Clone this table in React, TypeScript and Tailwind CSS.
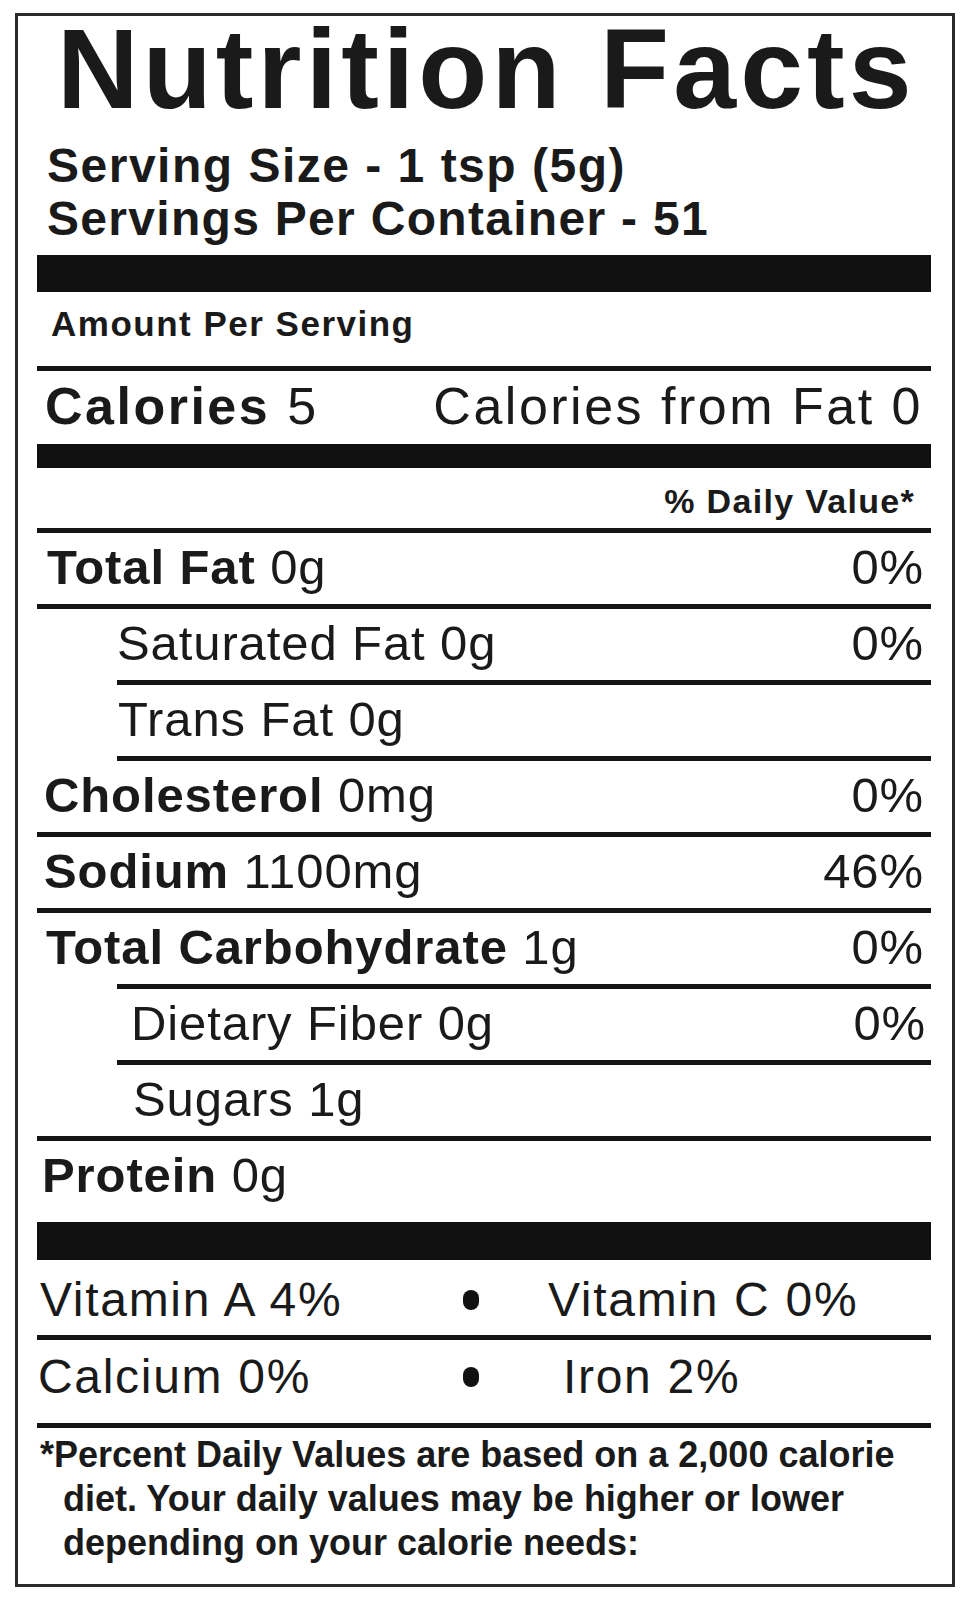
import React from "react";

type Row = {
  bold?: string;
  rest: string;
  dv?: string;
  pl: string;
  lineIndent: boolean;
  dvClass?: string;
};

const rows: Row[] = [
  { bold: "Total Fat", rest: "0g", dv: "0%", pl: "pl-[10px]", lineIndent: false },
  { rest: "Saturated Fat 0g", dv: "0%", pl: "pl-[80px]", lineIndent: false },
  { rest: "Trans Fat 0g", pl: "pl-[81px]", lineIndent: true },
  { bold: "Cholesterol", rest: "0mg", dv: "0%", pl: "pl-[7px]", lineIndent: true },
  { bold: "Sodium", rest: "1100mg", dv: "46%", pl: "pl-[7px]", lineIndent: false },
  { bold: "Total Carbohydrate", rest: "1g", dv: "0%", pl: "pl-[9px]", lineIndent: false },
  { rest: "Dietary Fiber 0g", dv: "0%", pl: "pl-[94px]", lineIndent: true, dvClass: "mr-[-2px]" },
  { rest: "Sugars 1g", pl: "pl-[96px]", lineIndent: true },
  { bold: "Protein", rest: "0g", pl: "pl-[5px]", lineIndent: false },
];

const Rule = ({ indent }: { indent?: boolean }) => (
  <div className={`h-[5px] bg-[#151515] ${indent ? "ml-[80px]" : ""}`} />
);

const NutrientRow = ({ row }: { row: Row }) => (
  <>
    <Rule indent={row.lineIndent} />
    <div className={`flex items-start justify-between h-[71px] text-[49px] leading-[68px] tracking-[0.9px] ${row.pl}`}>
      <span>
        {row.bold && <span className="font-bold">{row.bold} </span>}
        {row.rest}
      </span>
      {row.dv && <span className={`pr-[7px] ${row.dvClass ?? ""}`}>{row.dv}</span>}
    </div>
  </>
);

export default function App() {
  return (
    <div className="min-h-[1600px] bg-white pt-[13px] pl-[15px] font-['Liberation_Sans',Arial,sans-serif] text-[#1a1a1a]">
      <div className="w-[940px] border-[3px] border-[#2a2a2a] pl-[19px] pr-[21px] pb-[19px]">
        {/* Header */}
        <h1 className="pl-[20px] text-[113px] leading-[106px] font-bold tracking-[4.1px]">
          Nutrition Facts
        </h1>
        <div className="mt-[17px] pl-[10px] text-[48px] leading-[53px] font-bold">
          <div className="tracking-[1.5px]">Serving Size - 1 tsp (5g)</div>
          <div className="tracking-[1.3px]">Servings Per Container - 51</div>
        </div>

        <div className="mt-[10px] h-[37px] bg-[#111]" />

        <div className="mt-[12px] pl-[14px] text-[35px] leading-[40px] font-bold tracking-[1.5px]">
          Amount Per Serving
        </div>

        <div className="mt-[22px]">
          <Rule />
        </div>

        <div className="mt-[5px] flex justify-between pl-[8px] pr-[8px] text-[52px] leading-[60px] tracking-[2.5px]">
          <span>
            <span className="font-bold">Calories</span> 5
          </span>
          <span>Calories from Fat 0</span>
        </div>

        <div className="mt-[8px] h-[24px] bg-[#111]" />

        <div className="mt-[13px] pr-[16px] text-right text-[34px] leading-[40px] font-bold tracking-[1.3px]">
          % Daily Value*
        </div>

        {/* Nutrients */}
        <div className="mt-[7px]">
          {rows.map((r) => (
            <NutrientRow key={r.rest + (r.bold ?? "")} row={r} />
          ))}
        </div>

        <div className="mt-[10px] h-[38px] bg-[#111]" />

        {/* Vitamins */}
        <div className="flex items-center h-[75px] pt-[4px] text-[48px] leading-[71px] tracking-[1.7px]">
          <div className="w-[426px] pl-[3px]">Vitamin A 4%</div>
          <div className="w-[16px] h-[20px] rounded-full bg-[#111]" />
          <div className="ml-[69px]">Vitamin C 0%</div>
        </div>
        <Rule />
        <div className="flex items-center h-[74px] mb-[9px] text-[48px] leading-[74px] tracking-[1.7px]">
          <div className="w-[426px] pl-[1px]">Calcium 0%</div>
          <div className="w-[16px] h-[20px] rounded-full bg-[#111]" />
          <div className="ml-[84px]">Iron 2%</div>
        </div>
        <Rule />

        {/* Footnote */}
        <div className="pt-[5px] text-[36px] leading-[44px] font-bold">
          <div className="pl-[3px]">*Percent Daily Values are based on a 2,000 calorie</div>
          <div className="pl-[26px]">diet. Your daily values may be higher or lower</div>
          <div className="pl-[26px]">depending on your calorie needs:</div>
        </div>
      </div>
    </div>
  );
}
